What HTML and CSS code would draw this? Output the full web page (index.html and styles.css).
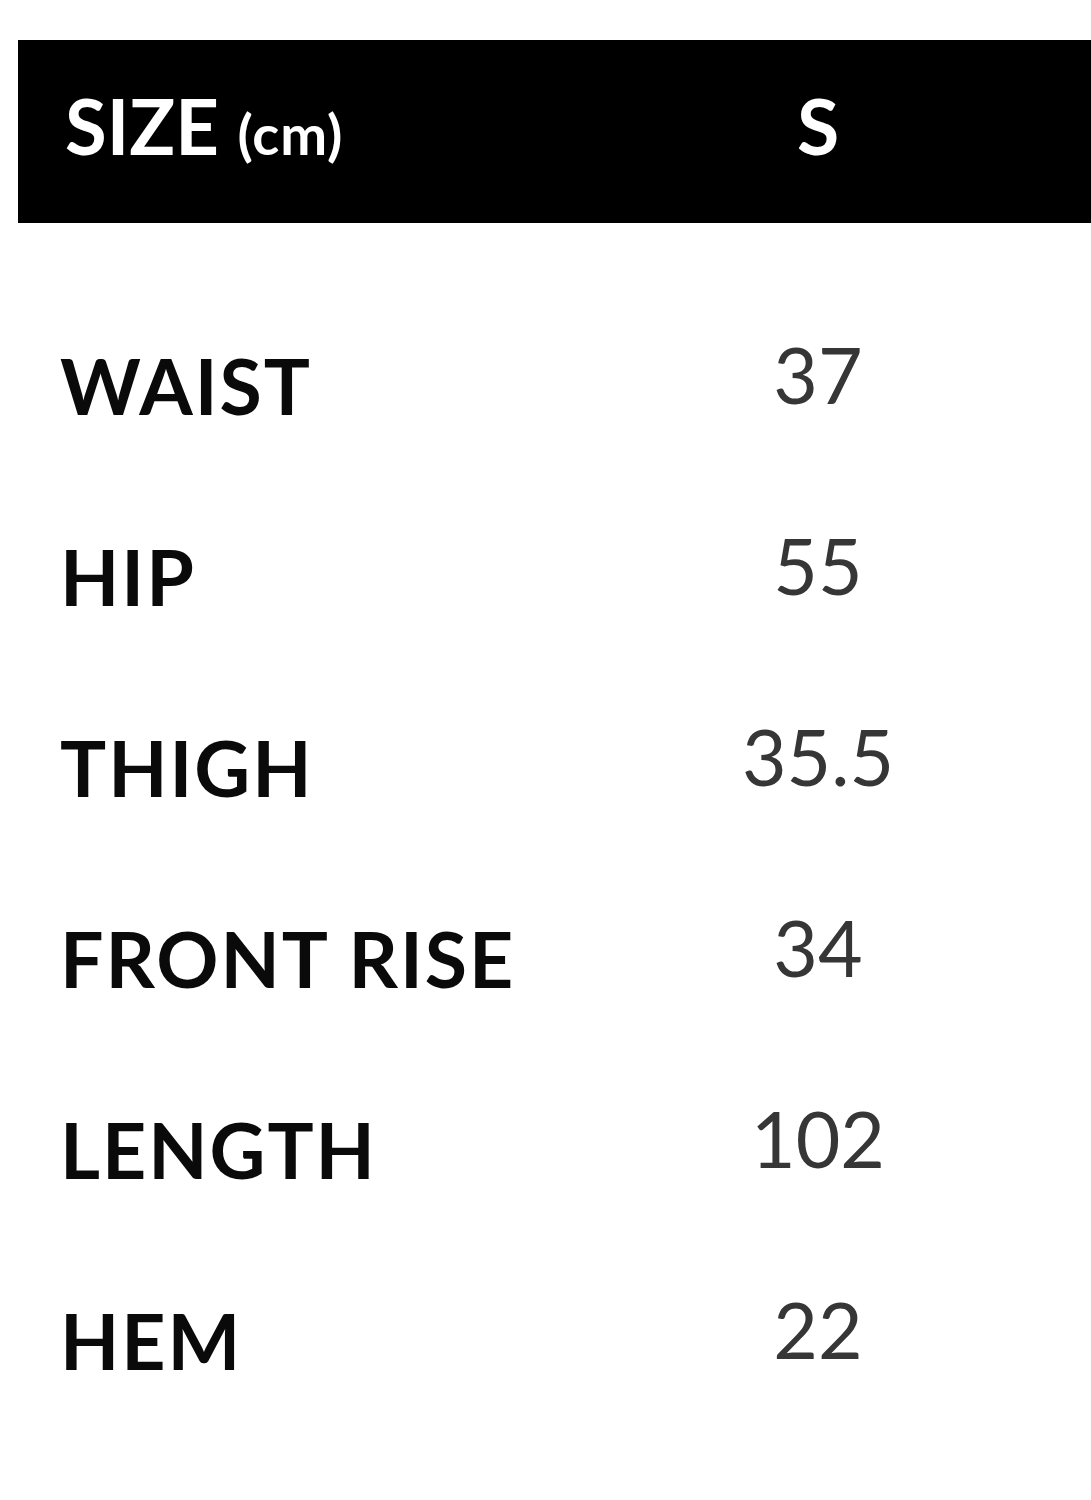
FILE: index.html
```html
<!DOCTYPE html>
<html>
<head>
<meta charset="utf-8">
<link rel="stylesheet" href="styles.css">
</head>
<body>
<div class="chart">
  <div class="head">
    <div class="hlabel">SIZE <span class="unit">(cm)</span></div>
    <div class="hval">S</div>
  </div>
  <div class="rows">
    <div class="row"><div class="label">WAIST</div><div class="val">37</div></div>
    <div class="row"><div class="label">HIP</div><div class="val">55</div></div>
    <div class="row"><div class="label">THIGH</div><div class="val">35.5</div></div>
    <div class="row"><div class="label">FRONT RISE</div><div class="val">34</div></div>
    <div class="row"><div class="label">LENGTH</div><div class="val">102</div></div>
    <div class="row"><div class="label">HEM</div><div class="val">22</div></div>
  </div>
</div>
</body>
</html>
```
FILE: styles.css
```css
html, body {
  margin: 0;
  padding: 0;
  background: #ffffff;
}
body {
  font-family: "Lato", "Noto Sans", sans-serif;
  width: 1091px;
  overflow: hidden;
}
.chart {
  margin: 40px 0 0 18px;
  width: 1073px;
}
.head {
  background: #000;
  color: #fff;
  height: 183px;
  display: grid;
  grid-template-columns: 527px 1fr;
  align-items: center;
}
.hlabel {
  font-weight: 700;
  font-size: 76px;
  line-height: 1;
  padding-left: 47px;
  padding-bottom: 12px;
  white-space: nowrap;
}
.unit {
  font-size: 56px;
  letter-spacing: 1px;
}
.hval {
  font-weight: 700;
  font-size: 77px;
  line-height: 1;
  text-align: center;
  padding-bottom: 12px;
}
.rows {
  padding-top: 67px;
}
.row {
  height: 191px;
  display: grid;
  grid-template-columns: 527px 1fr;
  align-items: center;
}
.label {
  font-weight: 700;
  font-size: 77px;
  line-height: 1;
  letter-spacing: 2px;
  color: #0a0a0a;
  padding-left: 42px;
  white-space: nowrap;
}
.val {
  font-weight: 400;
  font-size: 77px;
  line-height: 1;
  color: #363636;
  text-align: center;
  padding-bottom: 22px;
}
```
